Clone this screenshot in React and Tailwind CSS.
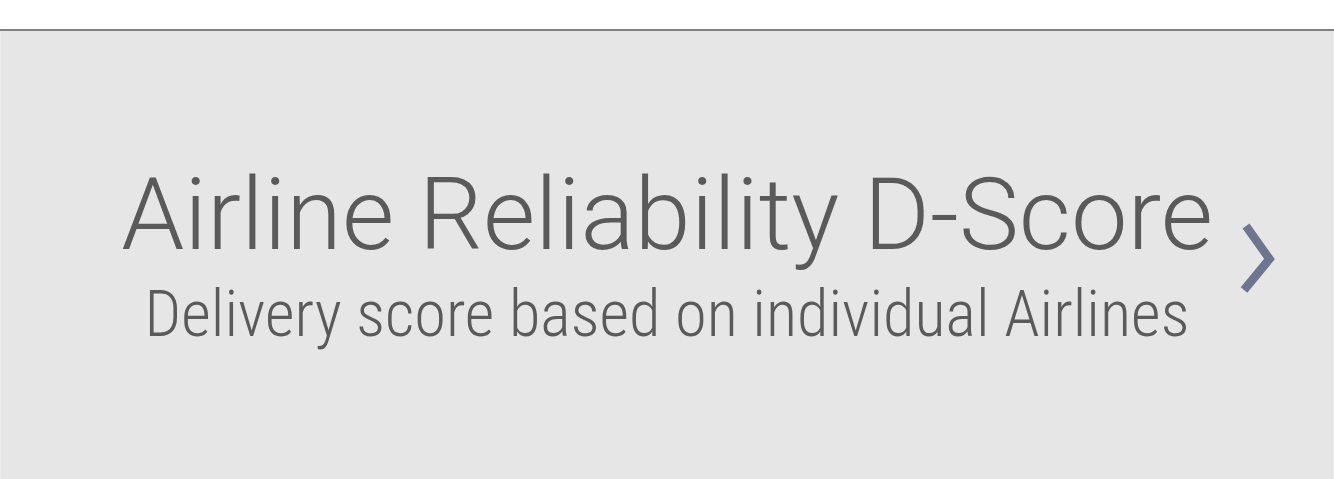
export default function App() {
  return (
    <div className="w-[1334px] h-[479px] bg-white flex flex-col">
      <div className="h-[29px] bg-white" />
      <div className="h-[2px] bg-[#808080]" />
      <div className="flex-1 bg-[#e6e6e6] border-x border-[#ececec] relative flex flex-col items-center">
        <div
          className="mt-[133px] text-[101px] leading-[101px] font-light text-[#5a5a5a] whitespace-nowrap"
          style={{ fontFamily: "Roboto, sans-serif" }}
        >
          Airline Reliability D-Score
        </div>
        <div
          className="mt-[17px] text-[64.5px] leading-[65px] font-light text-[#5a5a5a] whitespace-nowrap [font-stretch:condensed]"
          style={{ fontFamily: "Roboto, sans-serif" }}
        >
          Delivery score based on individual Airlines
        </div>
        <svg
          className="absolute left-[1229px] top-[184px]"
          width="60"
          height="90"
          viewBox="0 0 60 90"
        >
          <path d="M16 11 L39.5 44 L14 75" fill="none" stroke="#6e7590" strokeWidth="8.5" />
        </svg>
      </div>
    </div>
  );
}
